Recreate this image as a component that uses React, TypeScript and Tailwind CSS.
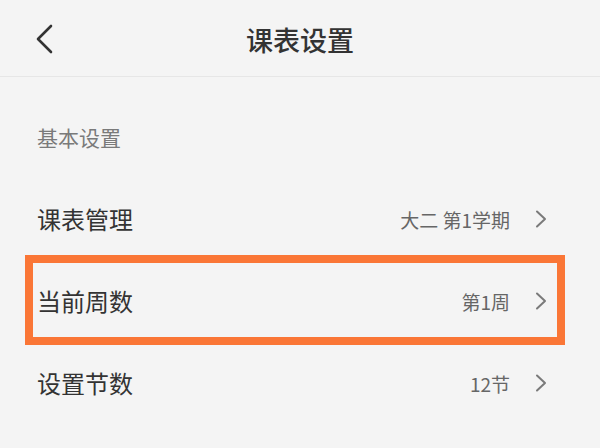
import React from "react";

function Chevron() {
  return (
    <svg width="14" height="20" viewBox="0 0 14 20" fill="none" className="shrink-0">
      <path d="M3 2.5L11 10L3 17.5" stroke="#7a7a7a" strokeWidth="2" strokeLinecap="round" strokeLinejoin="round" />
    </svg>
  );
}

function Row({ label, value, highlight }: { label: string; value: string; highlight?: boolean }) {
  return (
    <div className="relative h-[82px] flex items-center justify-between pl-[37px] pr-[52px]">
      <span className="text-[24px] leading-none text-[#333333]">{label}</span>
      <div className="flex items-center gap-[24px]">
        <span className="text-[19px] leading-none text-[#666666]">{value}</span>
        <Chevron />
      </div>
      {highlight && (
        <div className="pointer-events-none absolute left-[25px] top-[-5px] w-[540px] h-[90px] border-[8px] border-[#fa7636]" />
      )}
    </div>
  );
}

export default function App() {
  return (
    <div
      className="w-[600px] h-[448px] overflow-hidden bg-[#f4f4f4]"
      style={{ fontFamily: '"Noto Sans CJK SC", "Noto Sans", sans-serif' }}
    >
      <div className="h-[77px] border-b border-[#e6e6e6] grid grid-cols-[1fr_auto_1fr] items-center pt-[2px]">
        <div className="pl-[34px] flex items-center">
          <svg width="20" height="30" viewBox="0 0 20 30" fill="none">
            <path d="M17 2L4 15L17 28" stroke="#333333" strokeWidth="2.6" strokeLinecap="round" strokeLinejoin="round" />
          </svg>
        </div>
        <div className="text-[27px] leading-none text-[#333333] font-medium">课表设置</div>
        <div />
      </div>
      <div className="h-[101px] pl-[37px] pt-[50px]">
        <span className="text-[21px] leading-none text-[#7a7a7a]">基本设置</span>
      </div>
      <Row label="课表管理" value="大二 第1学期" />
      <Row label="当前周数" value="第1周" highlight />
      <Row label="设置节数" value="12节" />
    </div>
  );
}
